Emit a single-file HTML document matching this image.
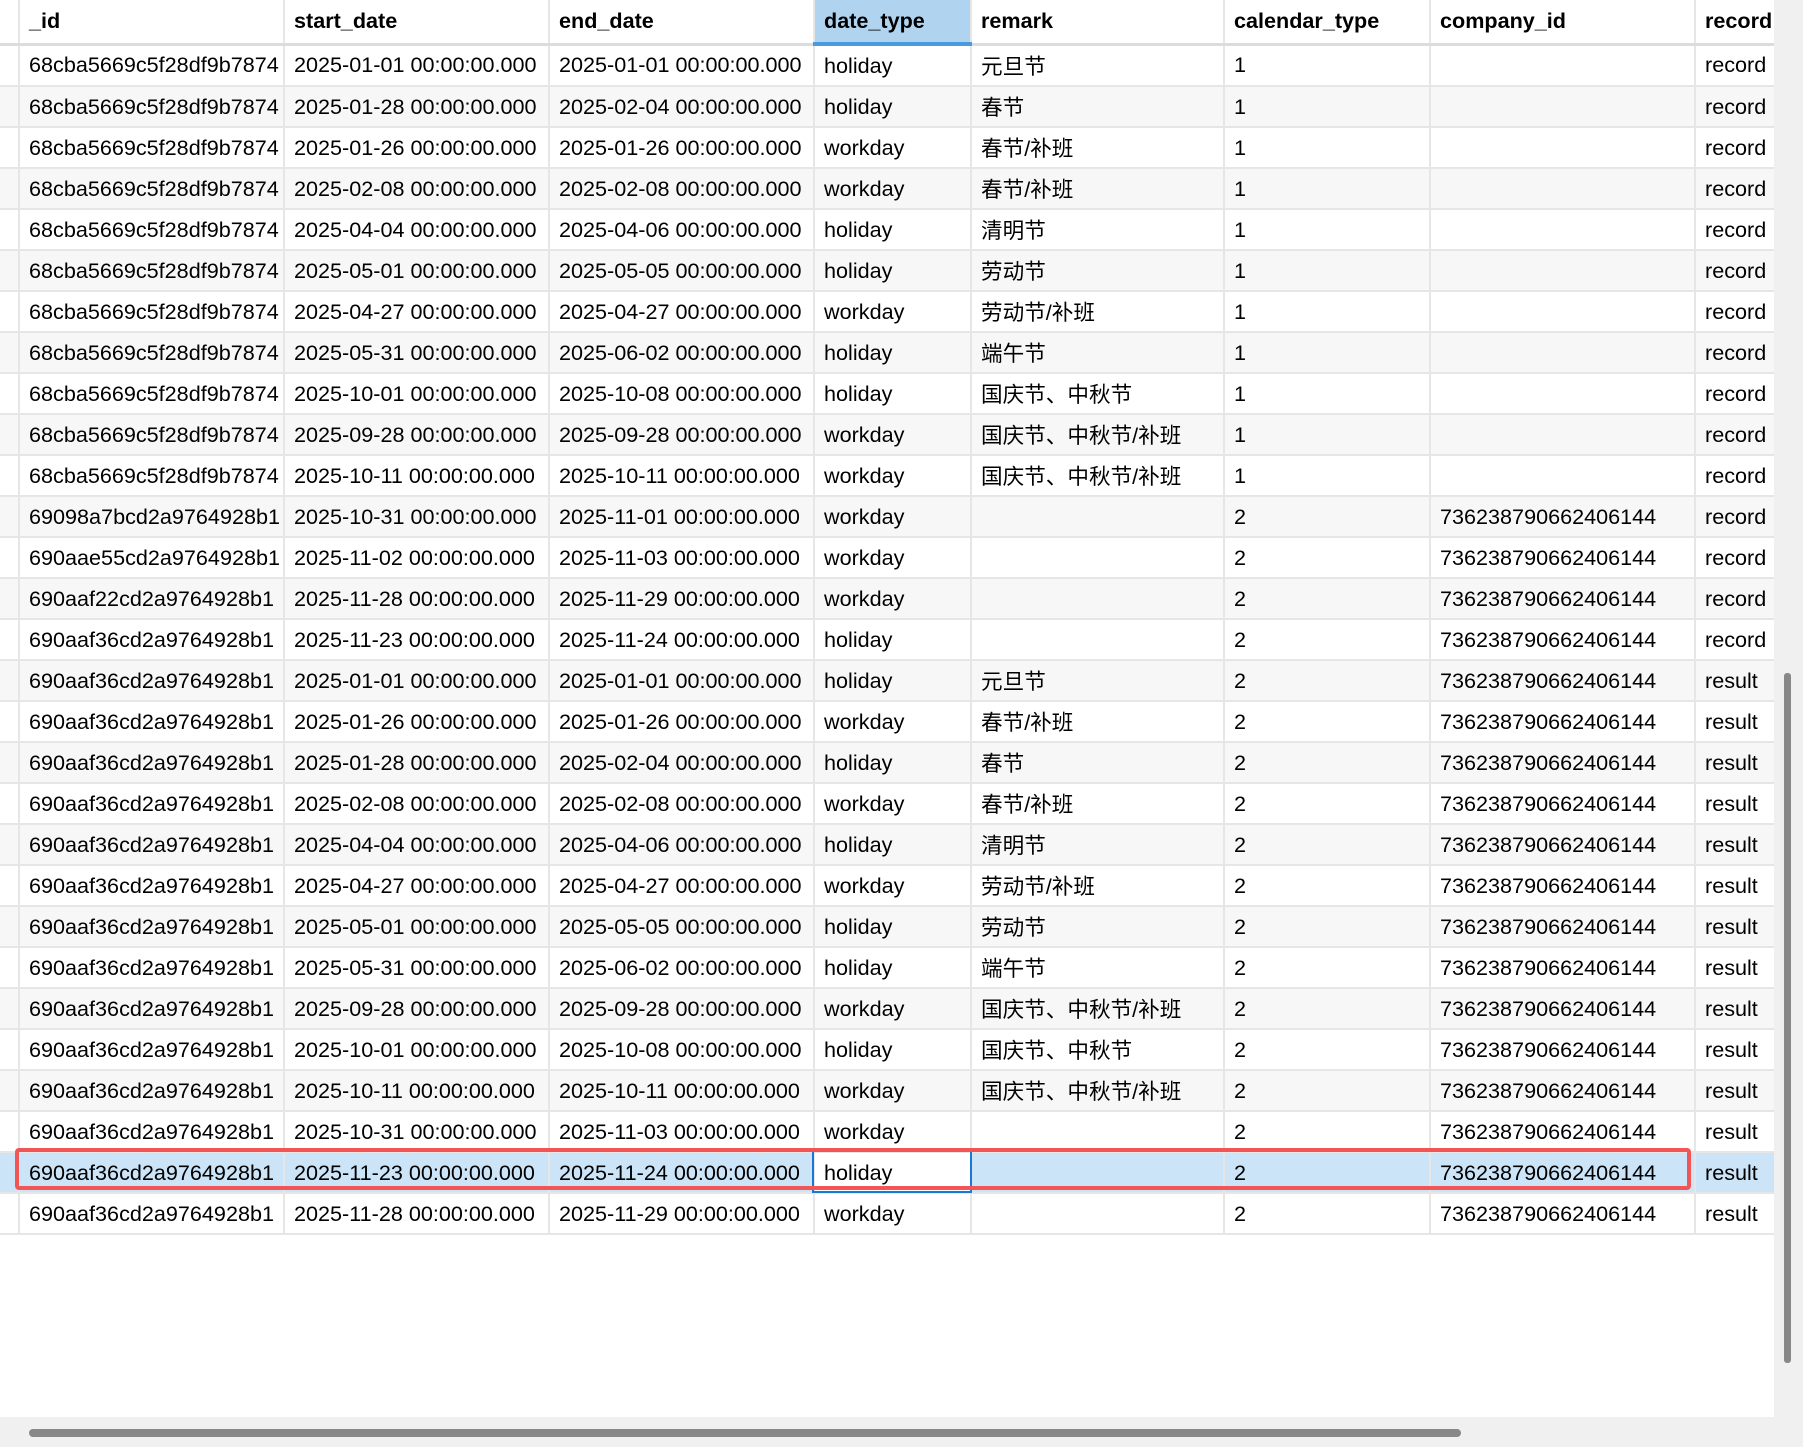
<!DOCTYPE html>
<html><head><meta charset="utf-8"><style>
body{margin:0;width:1803px;height:1447px;background:#f0f0f0;position:relative;overflow:hidden;font-family:"Liberation Sans","Noto Sans CJK SC",sans-serif;font-size:21.6px;color:#000}
#t{position:absolute;left:0;top:0;width:1774px;height:1417px;background:#fff;overflow:hidden}
table{border-collapse:collapse;table-layout:fixed;position:absolute;left:0;top:0;width:1800px}
td,th{height:39px;border:2px solid #e6e6e6;padding:0 0 0 9px;white-space:nowrap;overflow:hidden;text-align:left;border-top:none}
th{height:42px;font-weight:bold;border-bottom:3px solid #dcdcdc;border-top:none}
th.s{background:#b0d4f0;border-bottom:4px solid #4a9ae0}
tr:nth-child(even) td{background:#f7f7f7}
tr.sel td{background:#cce4f7}
td:first-child,th:first-child{padding:0;border-left:none}
</style></head><body>
<div id="t">
<table>
<colgroup><col style="width:19px"><col style="width:265px"><col style="width:265px"><col style="width:265px"><col style="width:157px"><col style="width:253px"><col style="width:206px"><col style="width:265px"><col style="width:105px"></colgroup>
<thead><tr><th></th><th>_id</th><th>start_date</th><th>end_date</th><th class="s">date_type</th><th>remark</th><th>calendar_type</th><th>company_id</th><th>record</th></tr></thead>
<tbody>
<tr><td></td><td>68cba5669c5f28df9b7874</td><td>2025-01-01 00:00:00.000</td><td>2025-01-01 00:00:00.000</td><td>holiday</td><td>元旦节</td><td>1</td><td></td><td>record</td></tr>
<tr><td></td><td>68cba5669c5f28df9b7874</td><td>2025-01-28 00:00:00.000</td><td>2025-02-04 00:00:00.000</td><td>holiday</td><td>春节</td><td>1</td><td></td><td>record</td></tr>
<tr><td></td><td>68cba5669c5f28df9b7874</td><td>2025-01-26 00:00:00.000</td><td>2025-01-26 00:00:00.000</td><td>workday</td><td>春节/补班</td><td>1</td><td></td><td>record</td></tr>
<tr><td></td><td>68cba5669c5f28df9b7874</td><td>2025-02-08 00:00:00.000</td><td>2025-02-08 00:00:00.000</td><td>workday</td><td>春节/补班</td><td>1</td><td></td><td>record</td></tr>
<tr><td></td><td>68cba5669c5f28df9b7874</td><td>2025-04-04 00:00:00.000</td><td>2025-04-06 00:00:00.000</td><td>holiday</td><td>清明节</td><td>1</td><td></td><td>record</td></tr>
<tr><td></td><td>68cba5669c5f28df9b7874</td><td>2025-05-01 00:00:00.000</td><td>2025-05-05 00:00:00.000</td><td>holiday</td><td>劳动节</td><td>1</td><td></td><td>record</td></tr>
<tr><td></td><td>68cba5669c5f28df9b7874</td><td>2025-04-27 00:00:00.000</td><td>2025-04-27 00:00:00.000</td><td>workday</td><td>劳动节/补班</td><td>1</td><td></td><td>record</td></tr>
<tr><td></td><td>68cba5669c5f28df9b7874</td><td>2025-05-31 00:00:00.000</td><td>2025-06-02 00:00:00.000</td><td>holiday</td><td>端午节</td><td>1</td><td></td><td>record</td></tr>
<tr><td></td><td>68cba5669c5f28df9b7874</td><td>2025-10-01 00:00:00.000</td><td>2025-10-08 00:00:00.000</td><td>holiday</td><td>国庆节、中秋节</td><td>1</td><td></td><td>record</td></tr>
<tr><td></td><td>68cba5669c5f28df9b7874</td><td>2025-09-28 00:00:00.000</td><td>2025-09-28 00:00:00.000</td><td>workday</td><td>国庆节、中秋节/补班</td><td>1</td><td></td><td>record</td></tr>
<tr><td></td><td>68cba5669c5f28df9b7874</td><td>2025-10-11 00:00:00.000</td><td>2025-10-11 00:00:00.000</td><td>workday</td><td>国庆节、中秋节/补班</td><td>1</td><td></td><td>record</td></tr>
<tr><td></td><td>69098a7bcd2a9764928b1</td><td>2025-10-31 00:00:00.000</td><td>2025-11-01 00:00:00.000</td><td>workday</td><td></td><td>2</td><td>736238790662406144</td><td>record</td></tr>
<tr><td></td><td>690aae55cd2a9764928b1</td><td>2025-11-02 00:00:00.000</td><td>2025-11-03 00:00:00.000</td><td>workday</td><td></td><td>2</td><td>736238790662406144</td><td>record</td></tr>
<tr><td></td><td>690aaf22cd2a9764928b1</td><td>2025-11-28 00:00:00.000</td><td>2025-11-29 00:00:00.000</td><td>workday</td><td></td><td>2</td><td>736238790662406144</td><td>record</td></tr>
<tr><td></td><td>690aaf36cd2a9764928b1</td><td>2025-11-23 00:00:00.000</td><td>2025-11-24 00:00:00.000</td><td>holiday</td><td></td><td>2</td><td>736238790662406144</td><td>record</td></tr>
<tr><td></td><td>690aaf36cd2a9764928b1</td><td>2025-01-01 00:00:00.000</td><td>2025-01-01 00:00:00.000</td><td>holiday</td><td>元旦节</td><td>2</td><td>736238790662406144</td><td>result</td></tr>
<tr><td></td><td>690aaf36cd2a9764928b1</td><td>2025-01-26 00:00:00.000</td><td>2025-01-26 00:00:00.000</td><td>workday</td><td>春节/补班</td><td>2</td><td>736238790662406144</td><td>result</td></tr>
<tr><td></td><td>690aaf36cd2a9764928b1</td><td>2025-01-28 00:00:00.000</td><td>2025-02-04 00:00:00.000</td><td>holiday</td><td>春节</td><td>2</td><td>736238790662406144</td><td>result</td></tr>
<tr><td></td><td>690aaf36cd2a9764928b1</td><td>2025-02-08 00:00:00.000</td><td>2025-02-08 00:00:00.000</td><td>workday</td><td>春节/补班</td><td>2</td><td>736238790662406144</td><td>result</td></tr>
<tr><td></td><td>690aaf36cd2a9764928b1</td><td>2025-04-04 00:00:00.000</td><td>2025-04-06 00:00:00.000</td><td>holiday</td><td>清明节</td><td>2</td><td>736238790662406144</td><td>result</td></tr>
<tr><td></td><td>690aaf36cd2a9764928b1</td><td>2025-04-27 00:00:00.000</td><td>2025-04-27 00:00:00.000</td><td>workday</td><td>劳动节/补班</td><td>2</td><td>736238790662406144</td><td>result</td></tr>
<tr><td></td><td>690aaf36cd2a9764928b1</td><td>2025-05-01 00:00:00.000</td><td>2025-05-05 00:00:00.000</td><td>holiday</td><td>劳动节</td><td>2</td><td>736238790662406144</td><td>result</td></tr>
<tr><td></td><td>690aaf36cd2a9764928b1</td><td>2025-05-31 00:00:00.000</td><td>2025-06-02 00:00:00.000</td><td>holiday</td><td>端午节</td><td>2</td><td>736238790662406144</td><td>result</td></tr>
<tr><td></td><td>690aaf36cd2a9764928b1</td><td>2025-09-28 00:00:00.000</td><td>2025-09-28 00:00:00.000</td><td>workday</td><td>国庆节、中秋节/补班</td><td>2</td><td>736238790662406144</td><td>result</td></tr>
<tr><td></td><td>690aaf36cd2a9764928b1</td><td>2025-10-01 00:00:00.000</td><td>2025-10-08 00:00:00.000</td><td>holiday</td><td>国庆节、中秋节</td><td>2</td><td>736238790662406144</td><td>result</td></tr>
<tr><td></td><td>690aaf36cd2a9764928b1</td><td>2025-10-11 00:00:00.000</td><td>2025-10-11 00:00:00.000</td><td>workday</td><td>国庆节、中秋节/补班</td><td>2</td><td>736238790662406144</td><td>result</td></tr>
<tr><td></td><td>690aaf36cd2a9764928b1</td><td>2025-10-31 00:00:00.000</td><td>2025-11-03 00:00:00.000</td><td>workday</td><td></td><td>2</td><td>736238790662406144</td><td>result</td></tr>
<tr class="sel"><td></td><td>690aaf36cd2a9764928b1</td><td>2025-11-23 00:00:00.000</td><td>2025-11-24 00:00:00.000</td><td style="background:#fff">holiday</td><td></td><td>2</td><td>736238790662406144</td><td>result</td></tr>
<tr><td></td><td>690aaf36cd2a9764928b1</td><td>2025-11-28 00:00:00.000</td><td>2025-11-29 00:00:00.000</td><td>workday</td><td></td><td>2</td><td>736238790662406144</td><td>result</td></tr>
</tbody></table>
</div>
<div style="position:absolute;left:812px;top:1151px;width:160px;height:42px;border:2px solid #1a78d4;box-sizing:border-box;border-top:none"></div>
<div style="position:absolute;left:15px;top:1148px;width:1676px;height:42px;border:4px solid #f25555;border-radius:4px;box-sizing:border-box"></div>
<div style="position:absolute;left:1784px;top:673px;width:7px;height:690px;background:#888;border-radius:3px"></div>
<div style="position:absolute;left:29px;top:1429px;width:1432px;height:8px;background:#888;border-radius:4px"></div>
</body></html>
